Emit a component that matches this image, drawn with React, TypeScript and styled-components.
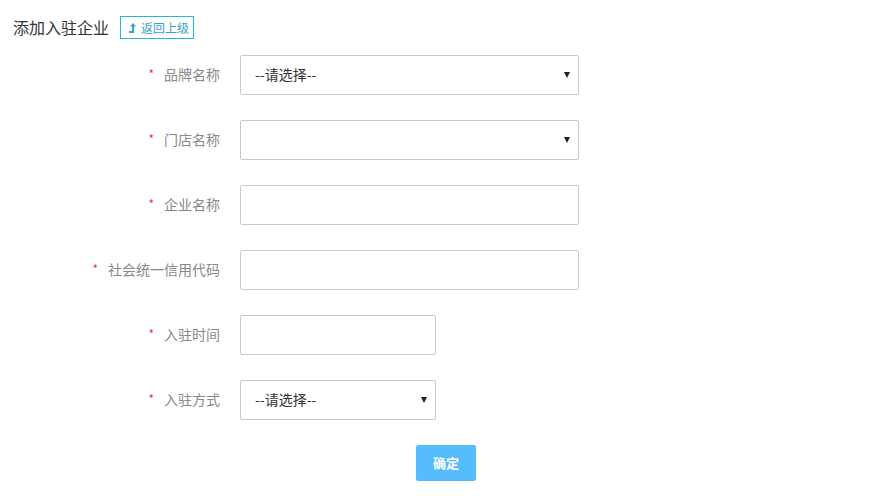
import * as React from 'react';
import styled, { createGlobalStyle } from 'styled-components';

const GlobalStyle = createGlobalStyle`
  body {
    margin: 0;
    background: #fff;
    font-family: "Noto Sans CJK SC", "Noto Sans", sans-serif;
  }
`;

const Page = styled.div`
  padding: 16px 13px 0;
`;

const Header = styled.div`
  display: flex;
  align-items: center;
  height: 23px;
  margin-bottom: 16px;
`;

const Title = styled.h2`
  margin: 0 11px 0 0;
  font-size: 16px;
  font-weight: normal;
  color: #333;
  line-height: 23px;
`;

const BackButton = styled.button`
  display: inline-flex;
  align-items: center;
  gap: 5px;
  height: 23px;
  padding: 0 4px 0 8px;
  border: 1px solid #2bb3de;
  background: #fff;
  color: #3a9fc9;
  font-family: inherit;
  font-size: 12px;
  line-height: 1;
  cursor: pointer;
`;

const Form = styled.form`
  display: flex;
  flex-direction: column;
  gap: 25px;
`;

const Row = styled.div`
  display: grid;
  grid-template-columns: 207px auto;
  column-gap: 20px;
  align-items: center;
`;

const Label = styled.label`
  display: flex;
  justify-content: flex-end;
  align-items: center;
  font-size: 14px;
  line-height: 20px;
  padding-bottom: 3px;
  color: #888;
`;

const Star = styled.span`
  color: #f33;
  font-size: 12px;
  margin-right: 10px;
`;

const Input = styled.input<{ $width: number }>`
  box-sizing: border-box;
  width: ${(p) => p.$width}px;
  height: 40px;
  border: 1px solid #bfcbd9;
  border-radius: 2px;
  padding: 0 14px;
  font-family: inherit;
  font-size: 14px;
  color: #333;
  outline: 0;
`;

const SelectWrap = styled.div<{ $width: number }>`
  position: relative;
  width: ${(p) => p.$width}px;
  &::after {
    content: '';
    position: absolute;
    right: 9px;
    top: 17px;
    border-left: 3.5px solid transparent;
    border-right: 3.5px solid transparent;
    border-top: 6px solid #222;
    pointer-events: none;
  }
`;

const Select = styled.select`
  box-sizing: border-box;
  appearance: none;
  width: 100%;
  height: 40px;
  border: 1px solid #bfcbd9;
  border-radius: 2px;
  padding: 0 0 2px 14px;
  background: #fff;
  font-family: inherit;
  font-size: 14px;
  color: #333;
  outline: 0;
`;

const Submit = styled.button`
  margin: 0 0 0 176px;
  width: 60px;
  height: 36px;
  border: 0;
  border-radius: 2px;
  background: #55bdfb;
  color: #fff;
  font-family: inherit;
  font-size: 13px;
  font-weight: bold;
  padding-bottom: 2px;
  cursor: pointer;
`;

const BackIcon = () => (
  <svg width="7" height="10" viewBox="0 0 7 10">
    <path d="M4 0 L7 3.5 H5 V10 H0 V8 H3 V3.5 H1 Z" fill="#3a9fc9" />
  </svg>
);

type Field = { label: string; kind: 'select' | 'input'; width: number; placeholder?: string };

const fields: Field[] = [
  { label: '品牌名称', kind: 'select', width: 339, placeholder: '--请选择--' },
  { label: '门店名称', kind: 'select', width: 339 },
  { label: '企业名称', kind: 'input', width: 339 },
  { label: '社会统一信用代码', kind: 'input', width: 339 },
  { label: '入驻时间', kind: 'input', width: 196 },
  { label: '入驻方式', kind: 'select', width: 196, placeholder: '--请选择--' },
];

export default function App() {
  return (
    <>
      <GlobalStyle />
      <Page>
        <Header>
          <Title>添加入驻企业</Title>
          <BackButton type="button">
            <BackIcon />
            返回上级
          </BackButton>
        </Header>
        <Form onSubmit={(e) => e.preventDefault()}>
          {fields.map((f) => (
            <Row key={f.label}>
              <Label>
                <Star>*</Star>
                {f.label}
              </Label>
              {f.kind === 'select' ? (
                <SelectWrap $width={f.width}>
                  <Select defaultValue="">
                    <option value="">{f.placeholder || ''}</option>
                  </Select>
                </SelectWrap>
              ) : (
                <Input $width={f.width} />
              )}
            </Row>
          ))}
          <Row>
            <span />
            <Submit type="submit">确定</Submit>
          </Row>
        </Form>
      </Page>
    </>
  );
}
